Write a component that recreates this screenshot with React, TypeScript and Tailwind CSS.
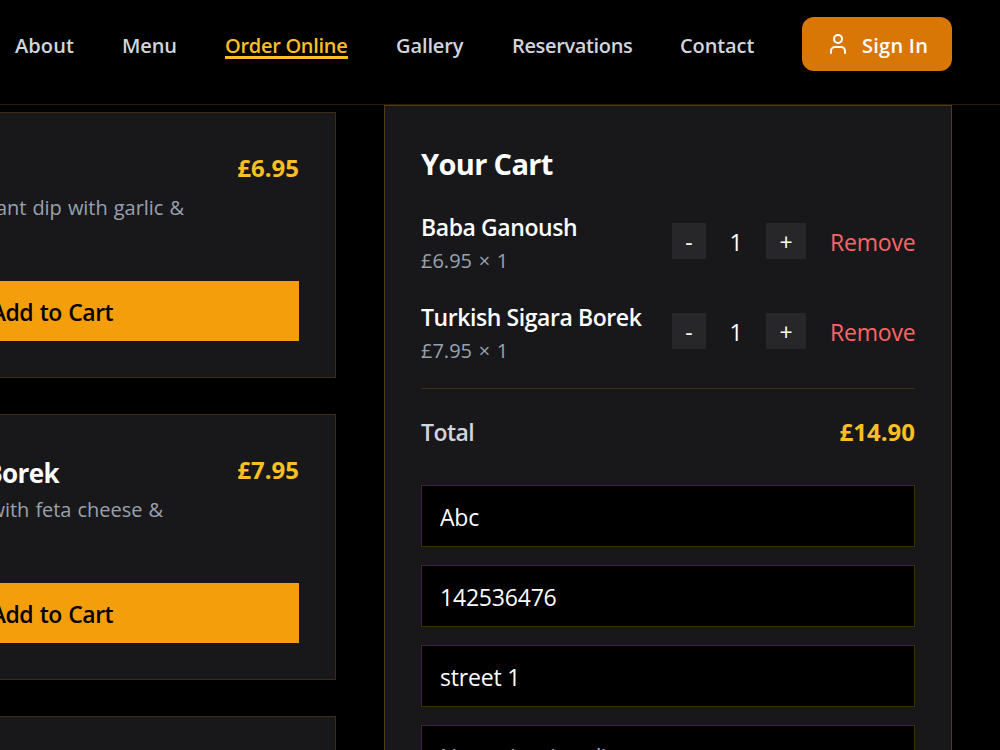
import { User } from "lucide-react";

const links = [
  { label: "About", box: "w-[59px] tracking-[0.1px]" },
  { label: "Menu", box: "w-[55px] tracking-[-0.1px]" },
  { label: "Order Online", box: "w-[123px] tracking-[-0.3px]", active: true },
  { label: "Gallery", box: "w-[68px] tracking-[-0.1px]" },
  { label: "Reservations", box: "w-[120px] tracking-[-0.35px]" },
  { label: "Contact", box: "w-[74px] tracking-[-0.1px]" },
];

function Header() {
  return (
    <header className="flex h-[105px] items-start justify-end border-b border-[#2b1b02] pr-12 pt-[17px]">
      <nav className="flex h-[54px] items-center gap-12">
        {links.map((l) => (
          <a
            key={l.label}
            className={`block h-[30px] whitespace-nowrap text-[20px] font-semibold leading-[33px] ${l.box} ${
              l.active ? "border-b-[3px] border-[#fbbf24] text-[#fbbf24]" : "text-[#d1d5dc]"
            }`}
          >
            {l.label}
          </a>
        ))}
        <button className="flex h-[54px] w-[150px] items-center gap-3 rounded-xl bg-[#d97706] pl-6 text-[20px] font-semibold text-white">
          <User size={24} strokeWidth={2} className="shrink-0" />
          <span className="whitespace-nowrap pt-[3px] tracking-[0.25px]">Sign In</span>
        </button>
      </nav>
    </header>
  );
}

function MenuCard({ title, text, price, textBox }: { title: string; text: string; price: string; textBox: string }) {
  return (
    <article className="flex h-[266px] flex-col border border-[#3d2b14] bg-[#18181b] p-9">
      <div className="flex justify-between">
        <div className="w-[379px] text-right">
          <h3 className="h-[42px] w-[254px] whitespace-nowrap text-right text-[26px] font-bold leading-[45px] tracking-[-0.6px] text-white">
            {title}
          </h3>
          <p className={`whitespace-nowrap text-[20px] leading-[33px] tracking-[-0.05px] text-[#99a1af] [word-spacing:1px] ${textBox}`}>{text}</p>
        </div>
        <span className="text-[24px] font-bold leading-[38px] text-[#fbbf24]">{price}</span>
      </div>
      <button className="mt-auto h-[60px] bg-[#f59e0b] pt-0.5 text-[23px] font-semibold tracking-[-0.5px] text-black [word-spacing:1px]">
        Add to Cart
      </button>
    </article>
  );
}

function CartRow({ name, price }: { name: string; price: string }) {
  return (
    <div className="flex h-[66px] items-center justify-between">
      <div className="whitespace-nowrap">
        <p className="text-[23px] font-semibold leading-[35px] tracking-[-0.42px] text-white">{name}</p>
        <p className="h-[31px] text-[20px] leading-8 text-[#99a1af] [word-spacing:1.5px]">{price} × 1</p>
      </div>
      <div className="flex items-center pb-1 text-[23px] text-white">
        <button className="h-9 w-[34px] bg-[#27272a] pt-px leading-9">-</button>
        <span className="w-[60px] pt-[3px] text-center">1</span>
        <button className="h-9 w-10 bg-[#27272a] pt-px leading-9">+</button>
        <button className="ml-6 w-[85px] whitespace-nowrap pt-[3px] text-left tracking-[-0.2px] text-[#ff6467]">Remove</button>
      </div>
    </div>
  );
}

const inputClass =
  "h-[62px] w-full border border-[#452c04] bg-black px-[18px] pt-0.5 text-[23px] tracking-[-0.2px] text-white outline-none placeholder:text-[#99a1af]";

export default function App() {
  return (
    <div className="h-[750px] w-[1000px] overflow-hidden bg-black font-['Open_Sans',sans-serif]">
      <Header />
      <main className="-ml-[232px] flex items-start gap-12">
        <section className="mt-[7px] flex w-[568px] shrink-0 flex-col gap-9">
          <MenuCard title="" text="eggplant dip with garlic &" price="£6.95" textBox="" />
          <MenuCard title="Sigara Borek" text="with feta cheese &" price="£7.95" textBox="pr-[21px]" />
          <article className="h-[266px] border border-[#3d2b14] bg-[#18181b]" />
        </section>
        <aside className="h-[800px] w-[568px] shrink-0 border border-[#533a13] bg-[#18181b] p-9">
          <h2 className="h-[68px] text-[29px] font-bold leading-[44px] tracking-[-0.65px] text-white">Your Cart</h2>
          <div className="flex flex-col gap-6">
            <CartRow name="Baba Ganoush" price="£6.95" />
            <CartRow name="Turkish Sigara Borek" price="£7.95" />
          </div>
          <div className="mt-[22px] flex h-[97px] items-start justify-between border-t border-[#452f16] pt-6 text-[23px] leading-[38px]">
            <span className="tracking-[-0.55px] font-semibold text-[#d1d5dc]">Total</span>
            <span className="text-[24px] font-bold text-[#fbbf24]">£14.90</span>
          </div>
          <div className="flex flex-col gap-[18px]">
            <input className={inputClass} defaultValue="Abc" />
            <input className={inputClass} defaultValue="142536476" />
            <input className={inputClass} defaultValue="street 1" />
            <input className={inputClass} placeholder="Notes (optional)" />
          </div>
        </aside>
      </main>
    </div>
  );
}
